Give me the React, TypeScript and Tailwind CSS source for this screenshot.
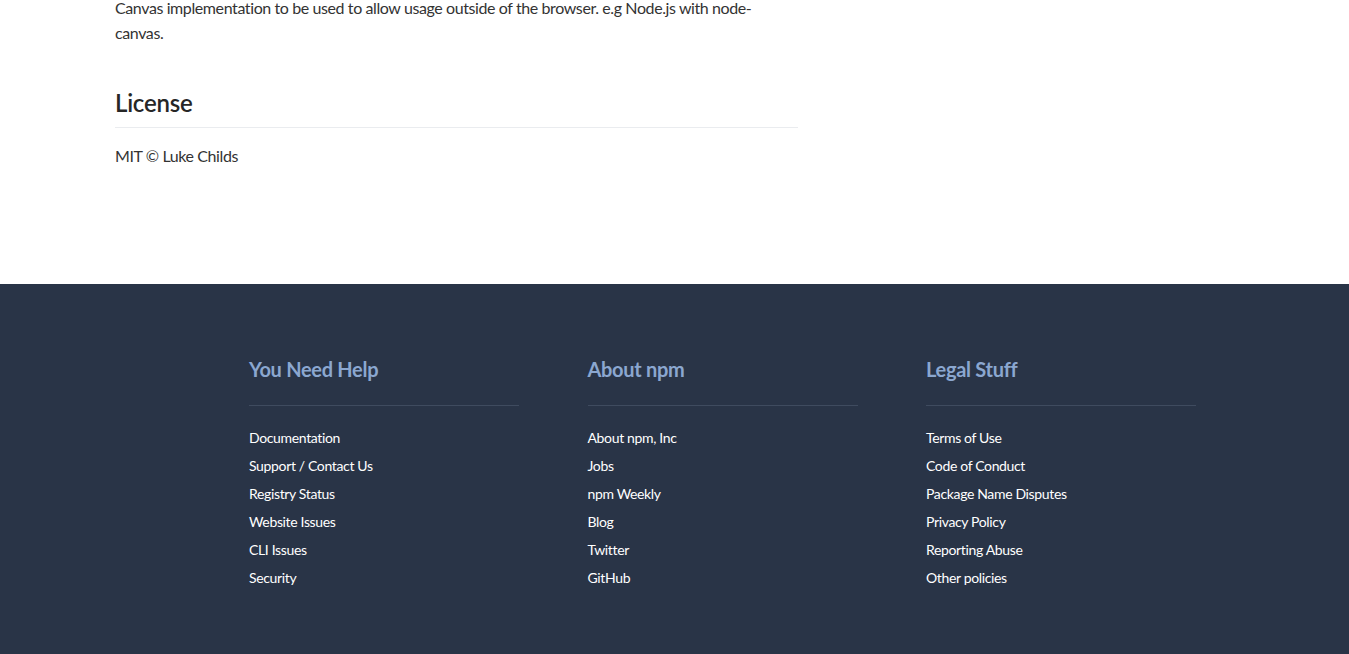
const columns = [
  {
    title: "You Need Help",
    links: ["Documentation", "Support / Contact Us", "Registry Status", "Website Issues", "CLI Issues", "Security"],
  },
  {
    title: "About npm",
    links: ["About npm, Inc", "Jobs", "npm Weekly", "Blog", "Twitter", "GitHub"],
  },
  {
    title: "Legal Stuff",
    links: ["Terms of Use", "Code of Conduct", "Package Name Disputes", "Privacy Policy", "Reporting Abuse", "Other policies"],
  },
]

export default function App() {
  return (
    <div className="min-h-screen bg-white font-['Lato','Liberation_Sans',sans-serif] overflow-hidden">
      {/* ── Readme tail ── */}
      <div className="h-[284px] overflow-hidden">
        <div className="-mt-[5px] ml-[115px] w-[683px] text-[#333333]">
          <p className="text-[16px] leading-[25px] tracking-[-0.025em]">
            Canvas implementation to be used to allow usage outside of the browser. e.g Node.js with node-
            <br />
            canvas.
          </p>
          <h2 className="mt-[43px] pb-[9px] border-b border-[#eaecef] text-[24px] leading-[30px] font-semibold tracking-[-0.01em] text-[#262626]">
            License
          </h2>
          <p className="mt-[15px] text-[16px] leading-[26px] tracking-[-0.025em]">MIT © Luke Childs</p>
        </div>
      </div>

      {/* ── Footer ── */}
      <footer className="bg-[#293447] pt-[73px] pb-[80px]">
        <div className="flex pl-[249px]">
          {columns.map((col) => (
            <div key={col.title} className="w-[338.5px] shrink-0">
              <div className="w-[270px]">
                <h3 className="text-[20px] leading-[25px] font-bold tracking-[-0.015em] text-[#8ba7d0]">{col.title}</h3>
                <div className="mt-[23px] h-px bg-[#3f4b5f]" />
                <ul className="mt-[18px]">
                  {col.links.map((l) => (
                    <li key={l} className="text-[14px] leading-[28px] tracking-[-0.025em] text-white">
                      {l}
                    </li>
                  ))}
                </ul>
              </div>
            </div>
          ))}
        </div>
      </footer>
    </div>
  )
}
